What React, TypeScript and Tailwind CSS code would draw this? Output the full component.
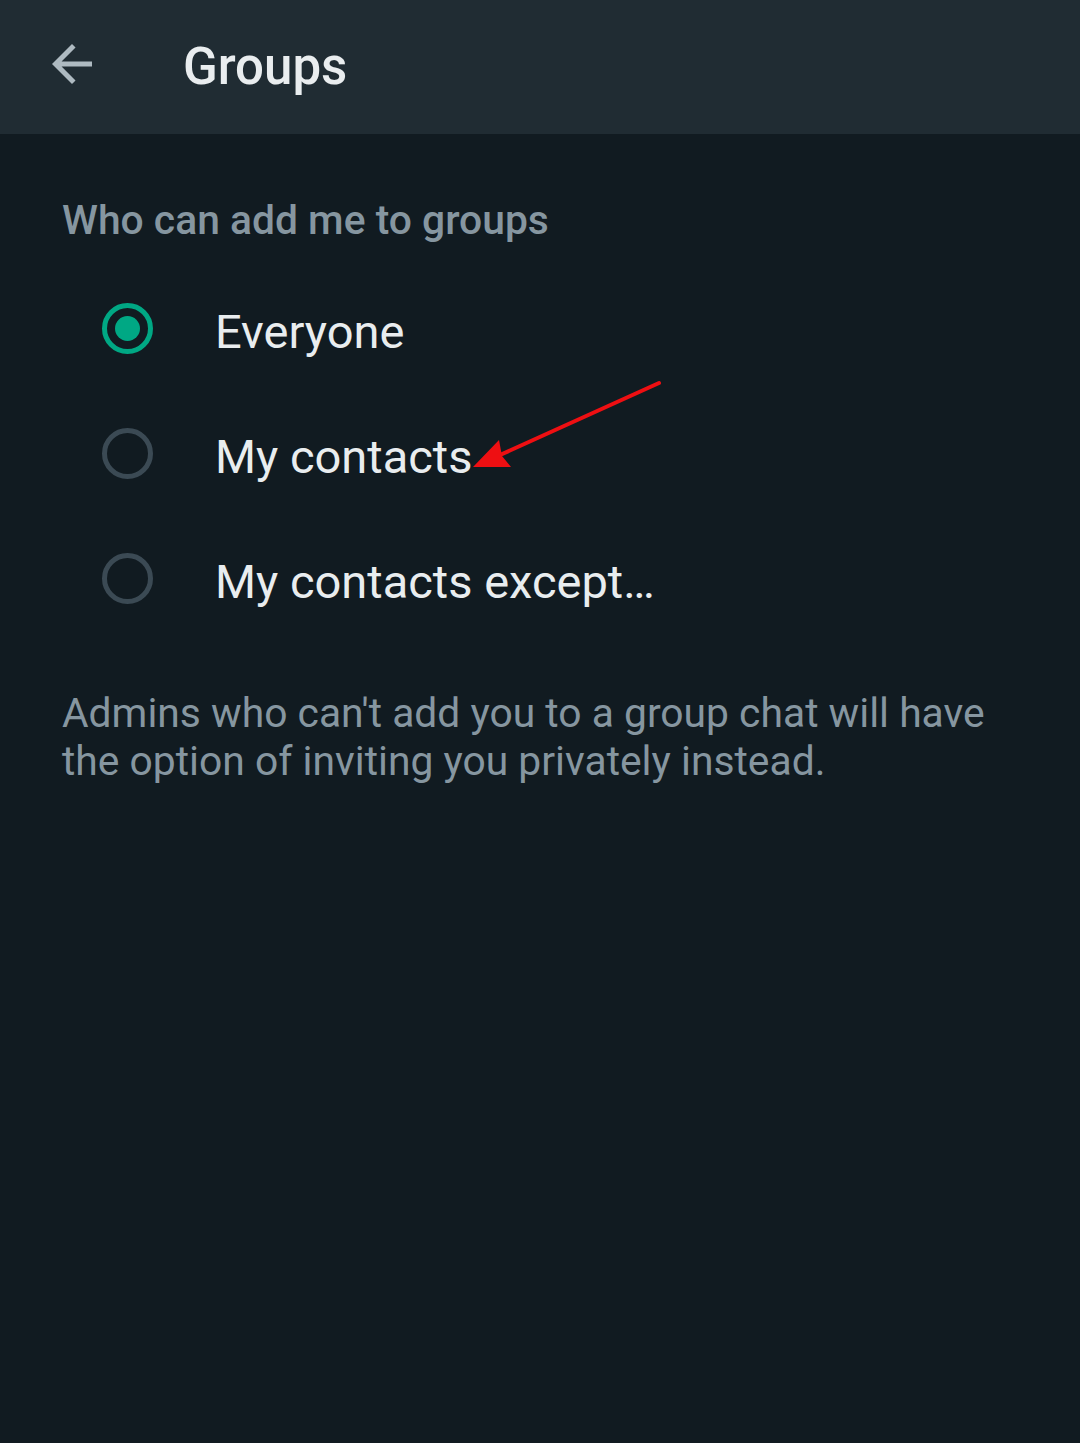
import React from "react";

const font = { fontFamily: "Roboto, 'Noto Sans', Arial, sans-serif" };

function Radio({ checked }: { checked?: boolean }) {
  return checked ? (
    <div className="w-[51px] h-[51px] rounded-full border-[5px] border-[#00a884] flex items-center justify-center shrink-0">
      <div className="w-[25px] h-[25px] rounded-full bg-[#00a884]" />
    </div>
  ) : (
    <div className="w-[51px] h-[51px] rounded-full border-[5px] border-[#3b4a54] shrink-0" />
  );
}

function Row({ label, checked }: { label: string; checked?: boolean }) {
  return (
    <div className="h-[125px] flex items-center pl-[102px]">
      <Radio checked={checked} />
      <span className="ml-[62px] text-[47px] leading-[54px] text-[#e9edef] pt-[6px]">{label}</span>
    </div>
  );
}

export default function App() {
  return (
    <div className="relative w-[1080px] h-[1443px] bg-[#111b21] overflow-hidden" style={font}>
      <header className="h-[134px] bg-[#202c33] flex items-center">
        <svg width="60" height="60" viewBox="0 0 24 24" className="ml-[42px] mb-[6px]" fill="#aebac1">
          <path d="M20 11H7.83l5.59-5.59L12 4l-8 8 8 8 1.41-1.41L7.83 13H20v-2z" />
        </svg>
        <h1 className="ml-[81px] text-[51px] leading-[60px] font-medium text-[#e9edef]">Groups</h1>
      </header>

      <section className="pt-[62px]">
        <div className="pl-[62px] text-[40.8px] leading-[48px] font-medium text-[#8696a0]">
          Who can add me to groups
        </div>
        <div className="mt-[22px]">
          <Row label="Everyone" checked />
          <Row label="My contacts" />
          <Row label="My contacts except…" />
        </div>
        <p className="mt-[48px] px-[62px] text-[40.8px] leading-[48px] text-[#8696a0]">
          Admins who can't add you to a group chat will have the option of inviting you privately instead.
        </p>
      </section>

      <svg className="absolute left-0 top-0 pointer-events-none" width="1080" height="1443">
        <line x1="659" y1="383" x2="500" y2="455" stroke="#ee0f12" strokeWidth="4" strokeLinecap="round" />
        <polygon points="473,467 499,440 502,456 511,467" fill="#ee0f12" />
      </svg>
    </div>
  );
}
